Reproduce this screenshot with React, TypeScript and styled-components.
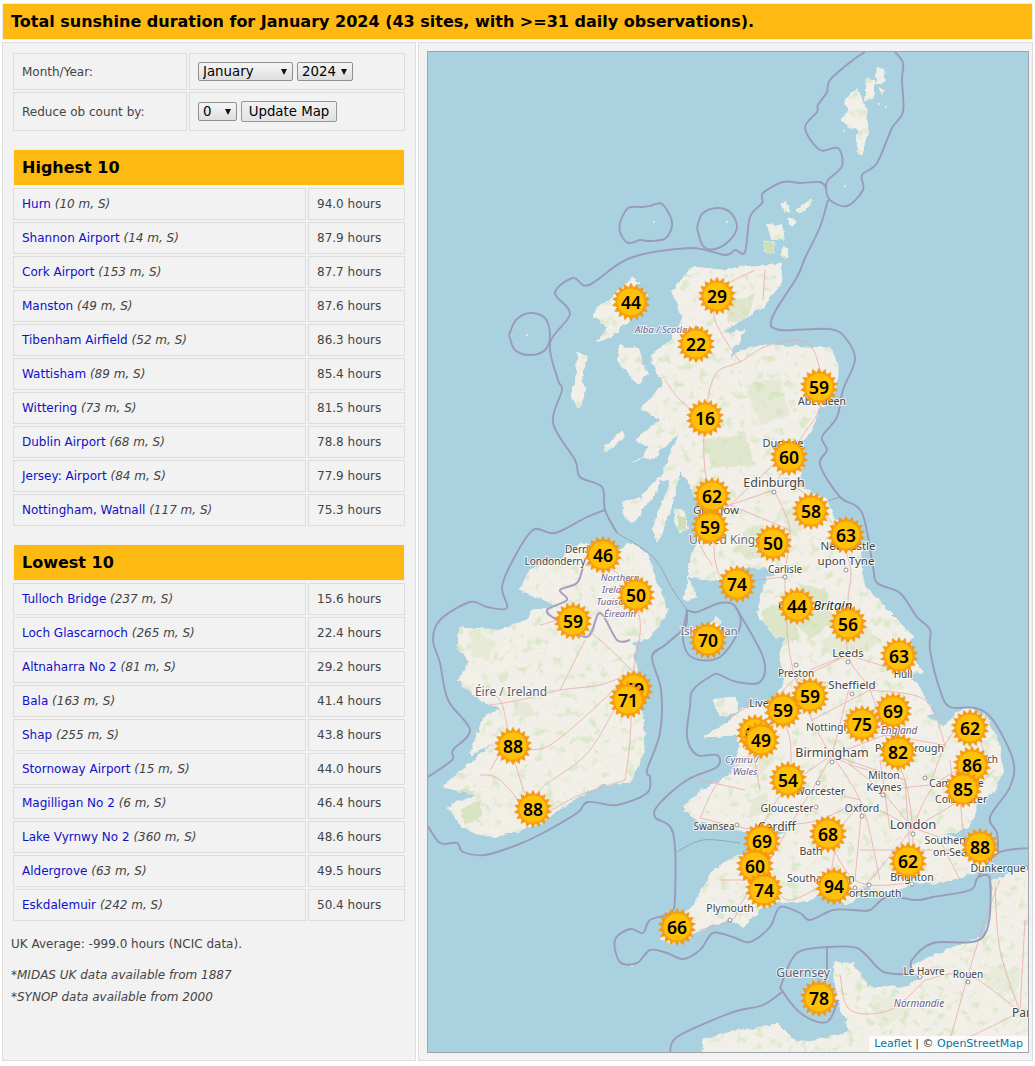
import React from 'react'
import styled, { createGlobalStyle } from 'styled-components'

const GlobalStyle = createGlobalStyle`
html, body {
  margin: 0;
  background: #fff;
}
body {
  font-family: "DejaVu Sans", sans-serif;
  font-size: 12px;
  color: #444;
}
`

type Row = { name: string; meta: string; value: string }

const highest: Row[] = [
  { name: 'Hurn', meta: '(10 m, S)', value: '94.0 hours' },
  { name: 'Shannon Airport', meta: '(14 m, S)', value: '87.9 hours' },
  { name: 'Cork Airport', meta: '(153 m, S)', value: '87.7 hours' },
  { name: 'Manston', meta: '(49 m, S)', value: '87.6 hours' },
  { name: 'Tibenham Airfield', meta: '(52 m, S)', value: '86.3 hours' },
  { name: 'Wattisham', meta: '(89 m, S)', value: '85.4 hours' },
  { name: 'Wittering', meta: '(73 m, S)', value: '81.5 hours' },
  { name: 'Dublin Airport', meta: '(68 m, S)', value: '78.8 hours' },
  { name: 'Jersey: Airport', meta: '(84 m, S)', value: '77.9 hours' },
  { name: 'Nottingham, Watnall', meta: '(117 m, S)', value: '75.3 hours' },
]

const lowest: Row[] = [
  { name: 'Tulloch Bridge', meta: '(237 m, S)', value: '15.6 hours' },
  { name: 'Loch Glascarnoch', meta: '(265 m, S)', value: '22.4 hours' },
  { name: 'Altnaharra No 2', meta: '(81 m, S)', value: '29.2 hours' },
  { name: 'Bala', meta: '(163 m, S)', value: '41.4 hours' },
  { name: 'Shap', meta: '(255 m, S)', value: '43.8 hours' },
  { name: 'Stornoway Airport', meta: '(15 m, S)', value: '44.0 hours' },
  { name: 'Magilligan No 2', meta: '(6 m, S)', value: '46.4 hours' },
  { name: 'Lake Vyrnwy No 2', meta: '(360 m, S)', value: '48.6 hours' },
  { name: 'Aldergrove', meta: '(63 m, S)', value: '49.5 hours' },
  { name: 'Eskdalemuir', meta: '(242 m, S)', value: '50.4 hours' },
]

const months = ['January', 'February', 'March', 'April', 'May', 'June', 'July', 'August', 'September', 'October', 'November', 'December']

// page coordinates of each pin, top of the map first
const pins: [number, number, number][] = [
  [717, 296, 29], [631, 302, 44], [696, 344, 22], [819, 387, 59], [705, 418, 16],
  [789, 457, 60], [712, 496, 62], [811, 511, 58], [710, 527, 59], [846, 535, 63],
  [773, 543, 50], [603, 555, 46], [737, 584, 74], [636, 595, 50], [797, 606, 44],
  [573, 621, 59], [848, 624, 56], [708, 640, 70], [899, 656, 63], [634, 689, 69],
  [810, 696, 59], [628, 700, 71], [783, 710, 59], [893, 711, 69], [862, 724, 75],
  [970, 728, 62], [755, 733, 64], [761, 740, 49], [513, 746, 88], [898, 752, 82],
  [972, 765, 86], [788, 780, 54], [963, 789, 85], [533, 809, 88], [828, 834, 68],
  [762, 841, 69], [980, 847, 88], [908, 861, 62], [755, 866, 60], [834, 886, 94],
  [764, 890, 74], [677, 927, 66], [819, 998, 78],
]

const land = [
  // Great Britain
  '692,267 720,270 753,266 780,264 782,280 763,307 737,323 722,333 745,330 728,360 742,350 763,345 803,347 830,348 838,367 838,375 833,393 820,410 807,437 790,443 803,447 803,460 800,480 775,478 803,488 827,500 833,517 860,540 862,580 880,603 900,623 913,637 907,650 923,673 897,673 917,682 933,713 925,716 945,726 962,708 985,715 1000,745 1003,770 995,790 977,803 973,817 967,827 953,833 940,835 965,840 985,838 998,850 990,863 973,873 940,883 913,883 880,897 867,887 847,897 820,893 807,902 787,900 763,907 753,917 743,927 730,920 712,925 695,933 678,945 660,940 672,925 690,910 713,870 737,856 770,857 775,838 793,830 775,832 737,830 720,823 700,822 683,810 690,800 702,790 730,775 741,745 735,735 703,737 727,723 745,708 775,700 785,680 780,653 787,637 775,638 757,613 767,577 782,573 763,568 737,567 725,580 687,577 697,597 684,600 692,553 697,540 703,510 695,495 680,470 672,505 657,543 652,530 672,478 660,480 680,432 660,450 633,462 660,447 636,440 660,420 640,408 664,385 650,357 670,340 683,317 672,290',
  // Ireland
  '583,543 595,548 605,555 620,550 633,543 647,553 657,583 668,610 650,637 633,643 637,670 633,680 643,720 645,750 630,782 600,785 573,800 540,823 505,835 487,837 463,827 447,807 477,795 443,787 477,757 500,740 470,755 483,717 503,710 480,700 457,680 470,663 457,647 460,627 500,630 527,620 533,610 560,607 520,590 530,570 560,560 570,550',
  // Lewis and Harris
  '633,277 639,283 620,300 647,293 627,323 607,338 598,342 607,328 594,317 597,307 610,300',
  // Skye
  '620,345 640,350 640,365 648,372 638,384 625,370 617,360',
  // Uist and Barra
  '578,352 586,358 582,378 585,395 578,408 572,400 576,375',
  // Mull
  '637,442 655,430 662,445 655,458 640,458 650,447',
  // Tiree and Coll
  '603,447 622,432 624,437 607,452',
  // Islay
  '623,503 640,497 641,515 632,523 624,516',
  // Jura
  '643,495 660,477 655,495 640,510',
  // Arran
  '676,510 684,512 688,528 680,532 675,522',
  // Man
  '700,640 716,617 721,620 716,640 702,650',
  // Anglesey
  '712,700 735,697 738,712 720,716',
  // Wight
  '840,897 855,894 860,898 846,904',
  // Orkney
  '767,224 783,226 784,240 772,240',
  '764,241 775,243 774,253 765,252',
  '783,246 788,247 787,257 783,257',
  '780,203 786,202 790,213 784,212',
  '797,210 810,200 810,205 800,214',
  '788,218 796,220 794,226 789,224',
  // Shetland
  '857,88 860,96 866,108 868,130 864,145 862,155 857,153 858,130 847,127 842,117 850,112 845,100',
  '867,78 874,80 873,97 866,100',
  '877,68 884,70 883,83 876,84',
  '880,88 884,90 882,94',
  // France
  '1029,868 993,880 990,920 983,937 953,947 910,967 920,977 907,987 867,987 853,963 833,963 837,997 850,1033 830,1037 797,1043 777,1023 753,1030 737,1030 703,1040 702,1053 1029,1053',
]

const islands = ['654,222', '727,222', '527,335', '845,186', '844,131', '632,966', '886,107', '879,104']

const bold = [
  '865,52 853,60 830,80 827,92 818,105 817,112 805,128 820,150 838,148 842,166 828,180 826,188 830,200 847,206 863,190 862,175 877,163 892,128 903,112 902,80 903,63 895,52',
  '826,188 820,182 800,183 783,182 763,193 762,203 750,217 745,252 735,250 725,255 690,248 630,258 589,285 573,278 555,293 570,314 550,343 558,380 562,390 553,423 575,460 580,477 602,487 605,510 617,533',
  '605,510 587,517 555,533 533,530 513,560 502,587 507,608 487,607 470,602 440,620 433,640 440,663 448,700 470,730 453,750 452,760 428,777',
  '428,826 440,843 457,843 463,852 485,855 517,845 543,833 577,813 588,802 617,805 647,793 650,777 647,770 660,733 661,690 652,657 665,645 685,627 687,610',
  '687,610 697,612 720,603 735,606 740,627 720,657 693,658 683,640 687,610',
  '735,606 763,657 760,682 737,682 720,675 713,675 693,690 690,707 687,737 697,755 717,755 717,767 687,780 660,803 655,817 673,833 675,897 670,913 650,920 643,933 630,929 615,940 620,962 637,963 650,950 667,953 683,959 700,950 713,933 733,937 750,942 770,927 780,907 800,913 810,920 833,910 853,910 870,910 887,897 917,900 933,897 970,890 978,877 998,853 1029,848',
  '998,853 997,833 990,817 1010,787 1013,760 993,720 975,708 950,707 940,690 930,650 930,630 917,617 900,593 877,583 873,567 862,513 840,497 820,465 827,450 822,437 837,417 843,390 855,360 847,340 830,329 780,330 772,318 797,277 805,258 820,227 828,200',
  '827,947 797,953 782,983 783,992 803,1015 827,1022 838,1000',
  '827,947 857,948 877,967 887,973 910,973 912,960 933,943 983,937 990,880 978,877',
  '827,947 827,970',
  '782,992 763,1005 740,1010 720,1017 677,1037 670,1052',
  // small rings round outlying rocks
  '620,222 628,208 642,207 650,206 662,204 672,222 666,238 650,241 640,240 628,243 620,232 620,222',
  '697,228 702,214 716,208 730,212 737,226 730,240 715,249 703,246 697,228',
  '509,335 516,320 530,313 545,318 550,335 545,350 530,355 515,350 509,335',
]

const faint = [
  '617,533 653,557 673,590 687,610',
  '685,627 653,655',
  '675,853 703,840 740,843',
  '840,497 815,505',
]

const irishBorder = '583,567 577,583 560,590 567,600 547,610 557,620 587,637 600,613 617,640 630,640'

const roads = [
  // England and Wales
  '913,828 880,790 850,765 832,755 812,720 796,680 788,640 785,577 790,530 774,490',
  '913,828 905,780 885,735 870,690 848,655 848,600 850,565 830,520 800,490 775,485',
  '913,828 862,805 820,820 790,825 760,830 730,825 700,818',
  '913,828 870,880 858,890',
  '913,828 912,880',
  '913,828 960,800 995,770',
  '913,828 975,850 992,860',
  '913,828 935,785 985,757',
  '930,785 945,745 960,725',
  '832,755 785,790 760,830',
  '832,755 862,805 880,880',
  '832,755 812,790 790,825 770,860 740,905 732,920 700,930',
  '848,655 903,672',
  '848,655 800,675 775,700',
  '850,685 800,680',
  '775,700 745,708 725,722',
  '775,705 790,740 790,790',
  '700,818 720,780 760,745 775,705',
  '862,805 855,880',
  '830,880 790,900 770,880 770,860',
  '885,735 945,745',
  '850,765 905,780',
  '830,880 840,830 862,805',
  '880,790 930,785',
  '905,780 912,880',
  '960,800 965,850',
  '850,685 832,755',
  '870,690 925,700 945,745',
  '812,720 870,690',
  '796,680 848,655',
  '832,755 905,780',
  '885,735 832,755',
  '820,820 855,880 913,883',
  '860,850 950,850',
  '950,760 955,800',
  '985,757 975,720',
  '700,780 745,790',
  '750,735 760,790',
  '720,880 770,880',
  '880,760 890,830',
  '820,790 860,800',
  '960,880 940,840',
  // Scotland
  '774,490 730,505 716,510 705,470 705,420 715,375 740,362 770,345 810,345 822,400 800,440 775,485',
  '716,510 715,560 730,580 785,577',
  '740,362 715,320 720,290 755,270',
  '800,440 730,505',
  '705,420 680,400 665,380',
  '716,510 700,540 712,565',
  '730,505 790,530',
  '763,300 765,270',
  // Ireland
  '633,672 600,685 560,690 520,700 490,705',
  '633,672 600,640 570,620 540,625',
  '633,672 640,620 620,575 585,565',
  '633,672 630,740 625,780',
  '633,672 590,750 540,790 535,820',
  '633,672 550,745 510,745 490,770',
  '510,745 535,810 580,795 625,780',
  '510,745 500,700 475,690',
  '620,575 640,585 655,600',
  '560,690 585,640',
  '535,820 500,780 480,775',
  // France
  '1020,1012 968,975 925,980',
  '1020,1012 1000,950 995,885',
  '1020,1012 960,1040 900,1050',
  '968,975 985,920 1000,880',
  '925,980 890,1010 850,1010 840,975',
  '1020,1012 1025,920',
  '968,975 950,1040',
]

const greens = [
  ['800,585 825,590 835,620 810,640 790,615', 0.6],
  ['790,600 760,610 770,640 800,640', 0.6],
  ['820,640 860,620 880,640 870,650 830,655', 0.35],
  ['730,300 755,295 745,322 728,322', 0.55],
  ['745,385 780,378 790,415 760,425', 0.4],
  ['700,440 745,435 755,465 715,468', 0.5],
  ['745,530 762,525 780,552 750,560 735,550', 0.5],
  ['780,510 795,505 805,528 788,535', 0.35],
  ['688,500 700,475 712,488 700,512', 0.5],
  ['752,800 768,792 768,812 748,818', 0.4],
  ['748,760 768,738 776,758 756,780', 0.4],
  ['470,632 495,640 488,660 472,656', 0.3],
  ['475,790 450,790 452,800 470,798', 0.7],
  ['460,810 480,800 482,815 465,825', 0.7],
  ['678,515 686,518 686,532 678,530', 1],
  ['764,241 775,243 774,253 765,252', 1],
  ['515,702 530,702 535,716 512,716', 0.35],
  ['870,995 920,1003 880,1030', 0.25],
  ['990,965 1020,972 1016,995 988,988', 0.25],
] as [string, number][]

type Label = { x: number; y: number; t: string; s?: number; c?: string; i?: boolean; a?: 'start' | 'middle' | 'end' }

const labels: Label[] = [
  { x: 635, y: 333, t: 'Alba / Scotland', s: 9.5, c: '#6e5c8c', i: true, a: 'start' },
  { x: 822, y: 405, t: 'Aberdeen', s: 10.5 },
  { x: 783, y: 447, t: 'Dundee', s: 11 },
  { x: 774, y: 487, t: 'Edinburgh', s: 12.5 },
  { x: 716, y: 514, t: 'Glasgow', s: 11.5 },
  { x: 689, y: 544, t: 'United Kingdom', s: 12, c: '#6f6a80', a: 'start' },
  { x: 848, y: 550, t: 'Newcastle', s: 11.5 },
  { x: 846, y: 565, t: 'upon Tyne', s: 11.5 },
  { x: 785, y: 573, t: 'Carlisle', s: 10 },
  { x: 580, y: 553, t: 'Derry/', s: 10 },
  { x: 555, y: 565, t: 'Londonderry', s: 10 },
  { x: 620, y: 581, t: 'Northern', s: 9.5, c: '#6e5c8c', i: true },
  { x: 620, y: 593, t: 'Ireland /', s: 9.5, c: '#6e5c8c', i: true },
  { x: 618, y: 605, t: 'Tuaisceart', s: 9.5, c: '#6e5c8c', i: true },
  { x: 620, y: 617, t: 'Éireann', s: 9.5, c: '#6e5c8c', i: true },
  { x: 778, y: 610, t: 'Great Britain', s: 13, c: '#222', i: true, a: 'start' },
  { x: 709, y: 635, t: 'Isle of Man', s: 11, c: '#6f6a80' },
  { x: 848, y: 657, t: 'Leeds', s: 11.5 },
  { x: 796, y: 677, t: 'Preston', s: 10 },
  { x: 903, y: 678, t: 'Hull', s: 10 },
  { x: 852, y: 689, t: 'Sheffield', s: 11.5 },
  { x: 511, y: 696, t: 'Éire / Ireland', s: 12, c: '#5c5c70' },
  { x: 772, y: 707, t: 'Liverpool', s: 10.5 },
  { x: 806, y: 731, t: 'Nottingham', s: 10.5, a: 'start' },
  { x: 899, y: 734, t: 'England', s: 10, c: '#6e5c8c', i: true },
  { x: 832, y: 757, t: 'Birmingham', s: 12.5 },
  { x: 875, y: 752, t: 'Peterborough', s: 10.5, a: 'start' },
  { x: 998, y: 763, t: 'Ipswich', s: 10, a: 'end' },
  { x: 742, y: 763, t: 'Cymru /', s: 9.5, c: '#6e5c8c', i: true },
  { x: 745, y: 775, t: 'Wales', s: 9.5, c: '#6e5c8c', i: true },
  { x: 884, y: 779, t: 'Milton', s: 10.5 },
  { x: 884, y: 791, t: 'Keynes', s: 10.5 },
  { x: 929, y: 787, t: 'Cambridge', s: 10.5, a: 'start' },
  { x: 820, y: 795, t: 'Worcester', s: 10.5 },
  { x: 935, y: 803, t: 'Colchester', s: 10.5, a: 'start' },
  { x: 787, y: 812, t: 'Gloucester', s: 10.5 },
  { x: 862, y: 812, t: 'Oxford', s: 10.5 },
  { x: 913, y: 829, t: 'London', s: 13 },
  { x: 777, y: 831, t: 'Cardiff', s: 12 },
  { x: 714, y: 830, t: 'Swansea', s: 10 },
  { x: 950, y: 844, t: 'Southend-', s: 10.5 },
  { x: 950, y: 856, t: 'on-Sea', s: 10.5 },
  { x: 811, y: 855, t: 'Bath', s: 10.5 },
  { x: 998, y: 872, t: 'Dunkerque', s: 10.5 },
  { x: 912, y: 881, t: 'Brighton', s: 10.5 },
  { x: 787, y: 882, t: 'Southampton', s: 10.5, a: 'start' },
  { x: 872, y: 897, t: 'Portsmouth', s: 10.5 },
  { x: 730, y: 912, t: 'Plymouth', s: 10.5 },
  { x: 803, y: 977, t: 'Guernsey', s: 12, c: '#5c5c70' },
  { x: 924, y: 975, t: 'Le Havre', s: 10 },
  { x: 968, y: 978, t: 'Rouen', s: 10 },
  { x: 919, y: 1007, t: 'Normandie', s: 10, c: '#6e5c8c', i: true },
  { x: 1012, y: 1017, t: 'Paris', s: 12, a: 'start' },
]

const dots: [number, number][] = [
  [774, 492], [848, 662], [846, 570], [785, 577], [796, 665], [852, 694], [832, 762], [883, 795], [925, 778],
  [818, 783], [816, 807], [862, 816], [913, 834], [737, 825], [912, 884], [855, 888], [869, 885], [730, 920], [920, 977], [968, 982], [1026, 868],
]

const smooth = (raw: string) => {
  const p = raw.split(' ').map((s) => s.split(',').map(Number))
  let d = `M${p[0][0]} ${p[0][1]}`
  for (let i = 0; i < p.length - 1; i++) {
    const a = p[Math.max(i - 1, 0)]
    const b = p[i]
    const c = p[i + 1]
    const e = p[Math.min(i + 2, p.length - 1)]
    d += `C${b[0] + (c[0] - a[0]) / 6} ${b[1] + (c[1] - a[1]) / 6} ${c[0] - (e[0] - b[0]) / 6} ${c[1] - (e[1] - b[1]) / 6} ${c[0]} ${c[1]}`
  }
  return d
}

const sunPoints = (() => {
  const out: string[] = []
  const spikes = 18
  for (let i = 0; i < spikes * 2; i++) {
    const r = i % 2 === 0 ? 18.8 : 14.4
    const a = (Math.PI * i) / spikes - Math.PI / 2
    out.push(`${(19 + r * Math.cos(a)).toFixed(2)},${(19 + r * Math.sin(a)).toFixed(2)}`)
  }
  return out.join(' ')
})()

const Page = styled.div`
  width: 1031px;
  padding: 3px 2px 0;
`

const Header = styled.h1`
  box-sizing: border-box;
  height: 37px;
  margin: 0;
  padding: 0 8px;
  display: flex;
  align-items: center;
  background: #feb913;
  border: 1px solid #eee;
  font-size: 16px;
  font-weight: 700;
  color: #000;
`

const Columns = styled.div`
  display: flex;
  gap: 2px;
  margin-top: 2px;
`

const SidePanel = styled.div`
  box-sizing: border-box;
  width: 414px;
  height: 1019px;
  padding: 8px;
  background: #f2f2f2;
  border: 1px solid #ddd;
`

const MapPanel = styled(SidePanel)`
  width: 615px;
`

const Table = styled.table`
  width: 396px;
  table-layout: fixed;
  border-collapse: separate;
  border-spacing: 2px;
`

const SectionTable = styled(Table)`
  margin-top: 14px;
`

const LabelCol = styled.col`
  width: 174px;
`

const NameCol = styled.col`
  width: 293px;
`

const FormLabel = styled.td`
  box-sizing: border-box;
  padding: 0 8px;
  border: 1px solid #ddd;
  color: #444;
`

const FormCell = styled.td`
  box-sizing: border-box;
  padding: 0 8px;
  border: 1px solid #ddd;
  white-space: nowrap;
`

const FormRow = styled.tr<{ $h: number }>`
  height: ${(p) => p.$h}px;
`

const SelectBox = styled.span`
  position: relative;
  display: inline-block;
  margin-right: 4px;
  vertical-align: middle;
  &::after {
    content: '';
    position: absolute;
    top: 7px;
    right: 6px;
    border-left: 3px solid transparent;
    border-right: 3px solid transparent;
    border-top: 6px solid #111;
    pointer-events: none;
  }
`

const Select = styled.select<{ $w: number }>`
  display: block;
  box-sizing: border-box;
  appearance: none;
  width: ${(p) => p.$w}px;
  height: 19px;
  margin: 0;
  padding: 0 0 0 4px;
  background: linear-gradient(#f6f6f6, #dedede);
  border: 1px solid #8f8f8f;
  border-radius: 2px;
  font-family: "DejaVu Sans", sans-serif;
  font-size: 13.33px;
  color: #000;
`

const Button = styled.button`
  box-sizing: border-box;
  width: 96px;
  height: 21px;
  padding: 0;
  background: linear-gradient(#f2f2f2, #e2e2e2);
  border: 1px solid #969696;
  border-radius: 2px;
  font-family: "DejaVu Sans", sans-serif;
  font-size: 13.33px;
  color: #000;
  vertical-align: middle;
`

const SectionHead = styled.th`
  box-sizing: border-box;
  height: 37px;
  padding: 0 8px;
  background: #feb913;
  border: 1px solid #eee;
  font-size: 16px;
  font-weight: 700;
  text-align: left;
  color: #000;
`

const NameCell = styled.td`
  box-sizing: border-box;
  height: 32px;
  padding: 0 8px;
  border: 1px solid #ddd;
`

const ValueCell = styled(NameCell)``

const SiteLink = styled.a`
  color: #1010c8;
  text-decoration: none;
`

const Meta = styled.i`
  color: #444;
`

const Line = styled.div`
  line-height: 22px;
  color: #444;
`

const Average = styled(Line)`
  margin-top: 10px;
  margin-bottom: 9px;
`

const NoteLine = styled(Line)`
  font-style: italic;
`

const MapFrame = styled.div`
  position: relative;
  box-sizing: border-box;
  width: 602px;
  height: 1002px;
  overflow: hidden;
  background: #aad1df;
  border: 1px solid #a0a4ab;
`

const MapArt = styled.svg`
  display: block;
  width: 600px;
  height: 1000px;
`

const Pin = styled.div`
  position: absolute;
  width: 38px;
  height: 38px;
  margin: -19px 0 0 -19px;
  display: flex;
  align-items: center;
  justify-content: center;
  font-family: "Noto Sans", sans-serif;
  font-size: 17.5px;
  font-weight: 600;
  color: #000;
`

const PinSun = styled.svg`
  position: absolute;
  inset: 0;
`

const PinText = styled.span`
  position: relative;
`

const Attribution = styled.div`
  position: absolute;
  right: 0;
  bottom: 0;
  padding: 0 5px;
  height: 16px;
  line-height: 16px;
  background: rgba(255, 255, 255, 0.8);
  font-size: 11px;
  color: #333;
`

const AttrLink = styled.a`
  color: #0078a8;
  text-decoration: none;
`

const SectionRows = ({ title, rows }: { title: string; rows: Row[] }) => (
  <SectionTable>
    <colgroup>
      <NameCol />
      <col />
    </colgroup>
    <tbody>
      <tr>
        <SectionHead colSpan={2}>{title}</SectionHead>
      </tr>
      {rows.map((r) => (
        <tr key={r.name}>
          <NameCell>
            <SiteLink href="#">{r.name}</SiteLink> <Meta>{r.meta}</Meta>
          </NameCell>
          <ValueCell>{r.value}</ValueCell>
        </tr>
      ))}
    </tbody>
  </SectionTable>
)

const BaseMap = () => (
  <MapArt viewBox="428 52 600 1000">
    <defs>
      <clipPath id="landclip">
        {land.map((d) => (
          <polygon key={d} points={d} />
        ))}
      </clipPath>
      <filter id="rough" filterUnits="userSpaceOnUse" x="400" y="30" width="660" height="1050">
        <feTurbulence type="fractalNoise" baseFrequency="0.13" numOctaves="3" seed="4" result="n" />
        <feDisplacementMap in="SourceGraphic" in2="n" scale="6" xChannelSelector="R" yChannelSelector="G" />
      </filter>
      <filter id="mottle" filterUnits="userSpaceOnUse" x="428" y="52" width="600" height="1000" colorInterpolationFilters="sRGB">
        <feTurbulence type="fractalNoise" baseFrequency="0.11" numOctaves="3" seed="11" />
        <feColorMatrix type="matrix" values="0 0 0 0 0.86  0 0 0 0 0.91  0 0 0 0 0.79  1 0 0 0 0" />
        <feComponentTransfer>
          <feFuncA type="linear" slope="5" intercept="-2.8" />
        </feComponentTransfer>
      </filter>
    </defs>
    <g filter="url(#rough)">
      {land.map((d) => (
        <polygon key={d} points={d} fill="#f2efe9" stroke="#f2efe9" strokeWidth="1" />
      ))}
      <g clipPath="url(#landclip)">
        <rect x="428" y="52" width="600" height="1000" filter="url(#mottle)" />
        {greens.map(([d, o]) => (
          <polygon key={d} points={d} fill="#cfdfb4" opacity={o} />
        ))}
      </g>
    </g>
    {islands.map((p) => {
      const [x, y] = p.split(',')
      return <circle key={p} cx={x} cy={y} r="1" fill="#f2efe9" />
    })}
    {roads.map((d) => (
      <path key={d} d={smooth(d)} fill="none" stroke="#eaa9a9" strokeWidth="0.8" />
    ))}
    {faint.map((d) => (
      <path key={d} d={smooth(d)} fill="none" stroke="#9a9bb8" strokeWidth="0.9" />
    ))}
    {bold.map((d) => (
      <path key={d} d={smooth(d)} fill="none" stroke="#9a9bb8" strokeWidth="1.9" strokeLinejoin="round" />
    ))}
    <path d={smooth(irishBorder)} fill="none" stroke="#a79fbd" strokeWidth="2" />
    {dots.map(([x, y]) => (
      <circle key={`${x}-${y}`} cx={x} cy={y} r="2" fill="#fff" stroke="#777" strokeWidth="0.8" />
    ))}
    {labels.map((l) => (
      <text
        key={l.t}
        x={l.x}
        y={l.y}
        fontFamily="'Noto Sans', sans-serif"
        fontSize={l.s ?? 11}
        fontStyle={l.i ? 'italic' : 'normal'}
        textAnchor={l.a ?? 'middle'}
        fill={l.c ?? '#444'}
        stroke="#fff"
        strokeOpacity="0.75"
        strokeWidth="2"
        paintOrder="stroke"
      >
        {l.t}
      </text>
    ))}
  </MapArt>
)

const App = () => (
  <Page>
    <GlobalStyle />
    <Header>Total sunshine duration for January 2024 (43 sites, with &gt;=31 daily observations).</Header>
    <Columns>
      <SidePanel>
        <Table>
          <colgroup>
            <LabelCol />
            <col />
          </colgroup>
          <tbody>
            <FormRow $h={37}>
              <FormLabel>Month/Year:</FormLabel>
              <FormCell>
                <SelectBox>
                  <Select $w={95} defaultValue="January">
                    {months.map((m) => (
                      <option key={m}>{m}</option>
                    ))}
                  </Select>
                </SelectBox>
                <SelectBox>
                  <Select $w={56} defaultValue="2024">
                    <option>2023</option>
                    <option>2024</option>
                  </Select>
                </SelectBox>
              </FormCell>
            </FormRow>
            <FormRow $h={39}>
              <FormLabel>Reduce ob count by:</FormLabel>
              <FormCell>
                <SelectBox>
                  <Select $w={39} defaultValue="0">
                    <option>0</option>
                    <option>1</option>
                    <option>10</option>
                  </Select>
                </SelectBox>
                <Button type="button">Update Map</Button>
              </FormCell>
            </FormRow>
          </tbody>
        </Table>
        <SectionRows title="Highest 10" rows={highest} />
        <SectionRows title="Lowest 10" rows={lowest} />
        <Average>UK Average: -999.0 hours (NCIC data).</Average>
        <NoteLine>*MIDAS UK data available from 1887</NoteLine>
        <NoteLine>*SYNOP data available from 2000</NoteLine>
      </SidePanel>
      <MapPanel>
        <MapFrame>
          <BaseMap />
          {pins.map(([x, y, n]) => (
            <Pin key={`${x}-${y}`} style={{ left: x - 428, top: y - 52 }}>
              <PinSun viewBox="0 0 38 38" width="38" height="38">
                <polygon points={sunPoints} fill="#f99c0b" stroke="#ee8f06" strokeWidth="0.5" />
                <circle cx="19" cy="19" r="13.6" fill="#ffc107" />
              </PinSun>
              <PinText>{n}</PinText>
            </Pin>
          ))}
          <Attribution>
            <AttrLink href="#">Leaflet</AttrLink> | © <AttrLink href="#">OpenStreetMap</AttrLink>
          </Attribution>
        </MapFrame>
      </MapPanel>
    </Columns>
  </Page>
)

export default App
